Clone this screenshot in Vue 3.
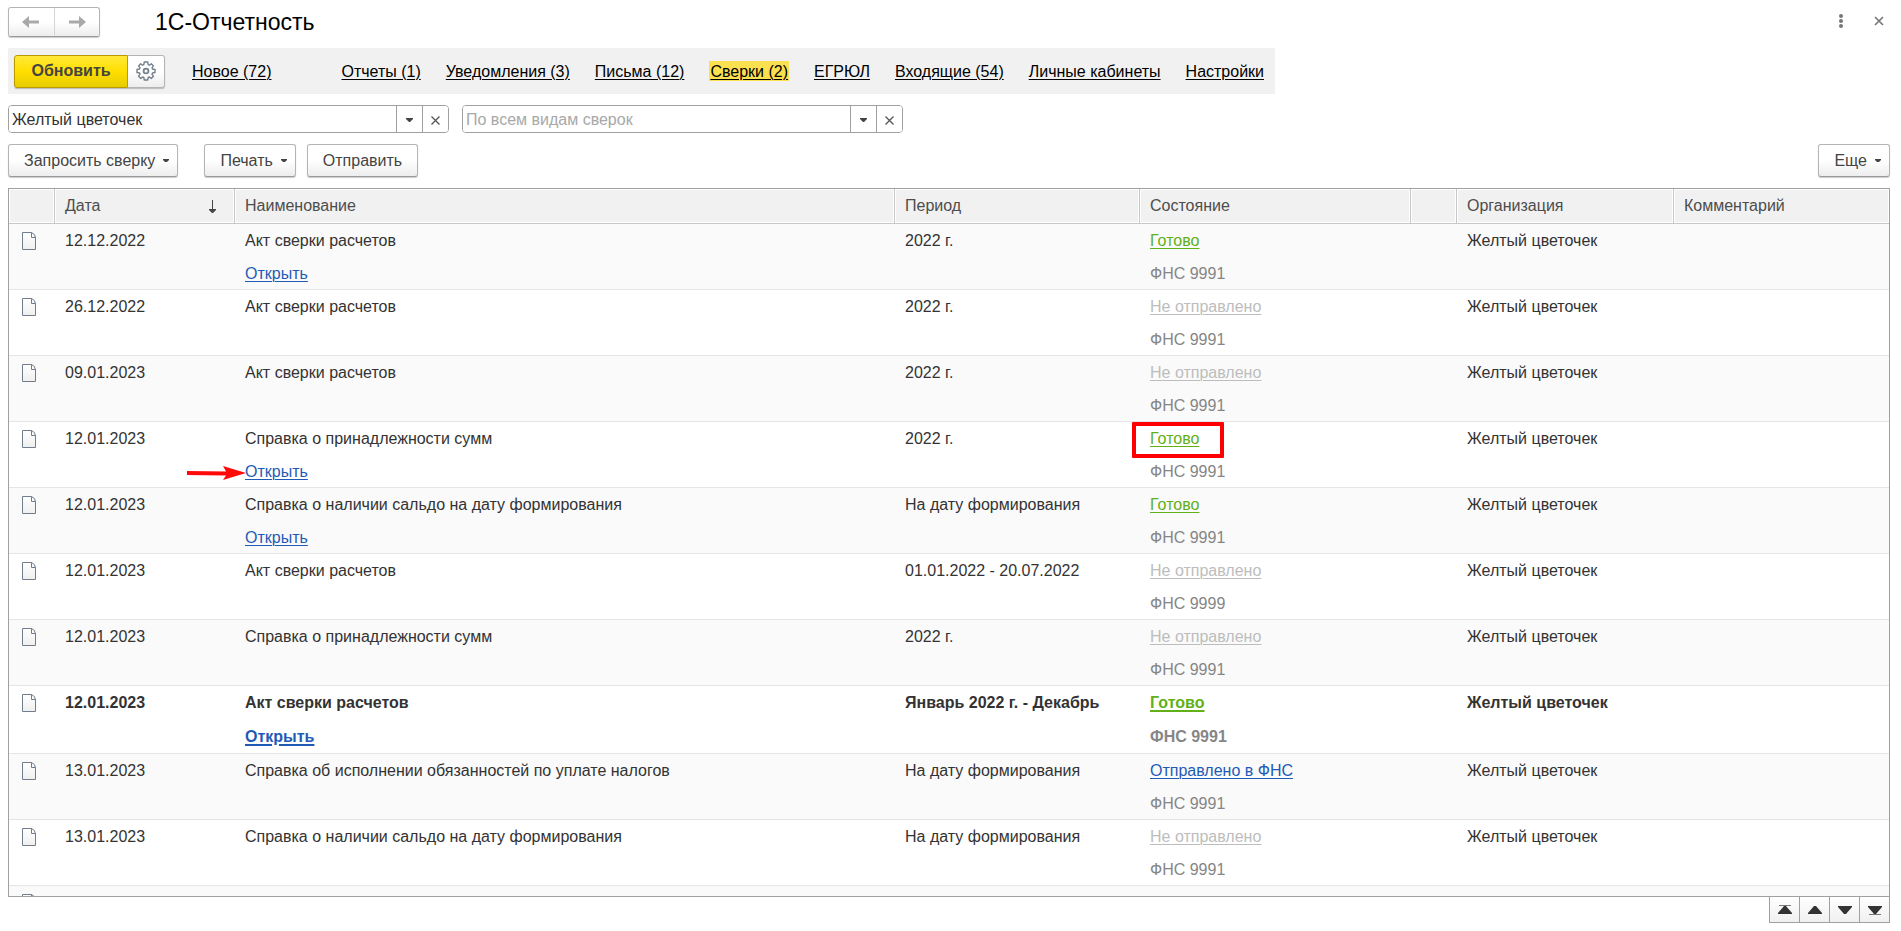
<script setup>
import { ref } from 'vue'

const organization = ref('Желтый цветочек')
const kind = ref('')

const links = [
  { text: 'Новое (72)', lead: true },
  { text: 'Отчеты (1)' },
  { text: 'Уведомления (3)' },
  { text: 'Письма (12)' },
  { text: 'Сверки (2)', current: true },
  { text: 'ЕГРЮЛ' },
  { text: 'Входящие (54)' },
  { text: 'Личные кабинеты' },
  { text: 'Настройки' },
]

const act = 'Акт сверки расчетов'
const belonging = 'Справка о принадлежности сумм'
const balance = 'Справка о наличии сальдо на дату формирования'
const onDate = 'На дату формирования'
const company = 'Желтый цветочек'
const ready = { text: 'Готово', tone: 'ready' }
const unsent = { text: 'Не отправлено', tone: 'unsent' }
const sent = { text: 'Отправлено в ФНС', tone: 'sent' }

const rows = [
  { date: '12.12.2022', name: act, open: true, period: '2022 г.', state: ready, office: 'ФНС 9991', company },
  { date: '26.12.2022', name: act, period: '2022 г.', state: unsent, office: 'ФНС 9991', company },
  { date: '09.01.2023', name: act, period: '2022 г.', state: unsent, office: 'ФНС 9991', company },
  { date: '12.01.2023', name: belonging, open: true, period: '2022 г.', state: ready, office: 'ФНС 9991', company, marked: true },
  { date: '12.01.2023', name: balance, open: true, period: onDate, state: ready, office: 'ФНС 9991', company },
  { date: '12.01.2023', name: act, period: '01.01.2022 - 20.07.2022', state: unsent, office: 'ФНС 9999', company },
  { date: '12.01.2023', name: belonging, period: '2022 г.', state: unsent, office: 'ФНС 9991', company },
  { date: '12.01.2023', name: act, open: true, period: 'Январь 2022 г. - Декабрь', state: ready, office: 'ФНС 9991', company, bold: true },
  { date: '13.01.2023', name: 'Справка об исполнении обязанностей по уплате налогов', period: onDate, state: sent, office: 'ФНС 9991', company },
  { date: '13.01.2023', name: balance, period: onDate, state: unsent, office: 'ФНС 9991', company },
  {},
]

const pagers = [
  { label: 'В начало', bar: 'M1 0H13V1H1Z', path: 'M6 1H8L14 8V9H0V8Z' },
  { label: 'Вверх', path: 'M6 1H8L14 8V9H0V8Z' },
  { label: 'Вниз', path: 'M0 1H14V2L8 9H6L0 2Z' },
  { label: 'В конец', bar: 'M1 9H13V10H1Z', path: 'M0 1H14V2L8 9H6L0 2Z' },
]
</script>

<template>
  <main class="page">
    <header class="top">
      <div class="history">
        <button type="button" class="history-button" aria-label="Назад">
          <svg width="18" height="14" viewBox="0 0 18 14"><path d="M0 7L7 1V5.5H17V8.5H7V13Z" fill="#a9a9a9" /></svg>
        </button>
        <button type="button" class="history-button" aria-label="Вперед">
          <svg width="18" height="14" viewBox="0 0 18 14"><path d="M18 7L11 1V5.5H1V8.5H11V13Z" fill="#a9a9a9" /></svg>
        </button>
      </div>
      <h1 class="title">1С-Отчетность</h1>
      <div class="window-tools">
        <button type="button" class="plain" aria-label="Меню">
          <svg width="6" height="16" viewBox="0 0 6 16" fill="#777"><circle cx="3" cy="3" r="2" /><circle cx="3" cy="8" r="2" /><circle cx="3" cy="13" r="2" /></svg>
        </button>
        <button type="button" class="plain" aria-label="Закрыть">
          <svg width="10" height="10" viewBox="0 0 10 10" stroke="#777" stroke-width="1.7"><path d="M1 1L9 9M9 1L1 9" /></svg>
        </button>
      </div>
    </header>

    <nav class="sections">
      <div class="refresh">
        <button type="button" class="refresh-button">Обновить</button>
        <button type="button" class="gear" aria-label="Настройка обновления">
          <svg width="20" height="20" viewBox="0 0 20 20" fill="none" stroke="#74808c" stroke-width="1.4" stroke-linejoin="round">
            <path d="M8.3 1H11.7L12.2 3.6L13.5 4.2L15.3 2.8L17.4 4.9L16 6.8L16.5 8L19 8.5V11.5L16.5 12L16 13.3L17.4 15.2L15.2 17.4L13.4 16L12.2 16.5L11.7 19H8.3L7.8 16.5L6.6 16L4.8 17.4L2.6 15.2L4 13.3L3.5 12L1 11.5V8.5L3.5 8L4 6.8L2.6 4.9L4.7 2.8L6.5 4.2L7.8 3.6Z" />
            <circle cx="10" cy="10" r="2.4" stroke-width="1.8" />
          </svg>
        </button>
      </div>
      <a v-for="l in links" :key="l.text" href="#" class="section" :class="{ lead: l.lead, current: l.current }">{{ l.text }}</a>
    </nav>

    <div class="filters">
      <div class="combo">
        <input v-model="organization" type="text" class="combo-input" aria-label="Организация">
        <button type="button" class="combo-button" aria-label="Выбрать организацию"><svg width="7" height="4" viewBox="0 0 7 4"><path d="M0 0H7V1L4 4H3L0 1Z" fill="#444" /></svg></button>
        <button type="button" class="combo-button" aria-label="Очистить организацию"><svg width="9" height="9" viewBox="0 0 9 9" stroke="#555" stroke-width="1.3"><path d="M.5 .5L8.5 8.5M8.5 .5L.5 8.5" /></svg></button>
      </div>
      <div class="combo">
        <input v-model="kind" type="text" class="combo-input" placeholder="По всем видам сверок" aria-label="Вид сверки">
        <button type="button" class="combo-button" aria-label="Выбрать вид сверки"><svg width="7" height="4" viewBox="0 0 7 4"><path d="M0 0H7V1L4 4H3L0 1Z" fill="#444" /></svg></button>
        <button type="button" class="combo-button" aria-label="Очистить вид сверки"><svg width="9" height="9" viewBox="0 0 9 9" stroke="#555" stroke-width="1.3"><path d="M.5 .5L8.5 8.5M8.5 .5L.5 8.5" /></svg></button>
      </div>
    </div>

    <div class="commands">
      <button type="button" class="command with-menu request">Запросить сверку<svg width="6" height="3" viewBox="0 0 6 3"><path d="M0 0H6V1L4 3H2L0 1Z" fill="#444" /></svg></button>
      <button type="button" class="command with-menu">Печать<svg width="6" height="3" viewBox="0 0 6 3"><path d="M0 0H6V1L4 3H2L0 1Z" fill="#444" /></svg></button>
      <button type="button" class="command">Отправить</button>
      <button type="button" class="command with-menu more">Еще<svg width="6" height="3" viewBox="0 0 6 3"><path d="M0 0H6V1L4 3H2L0 1Z" fill="#444" /></svg></button>
    </div>

    <div class="list">
      <table class="grid">
        <colgroup>
          <col class="c-icon"><col class="c-date"><col><col class="c-period"><col class="c-state"><col class="c-flag"><col class="c-org"><col class="c-note">
        </colgroup>
        <thead>
          <tr>
            <th></th>
            <th>
              <span class="sorted">Дата
                <svg width="7" height="13" viewBox="0 0 7 13"><path d="M3 0H4V9H7V10L4 13H3L0 10V9H3Z" fill="#444" /></svg>
              </span>
            </th>
            <th>Наименование</th>
            <th>Период</th>
            <th>Состояние</th>
            <th></th>
            <th>Организация</th>
            <th>Комментарий</th>
          </tr>
        </thead>
        <tbody>
          <tr v-for="(r, i) in rows" :key="i" :class="{ bold: r.bold }">
            <td class="icon-cell">
              <svg width="14" height="18" viewBox="0 0 14 18">
                <defs>
                  <linearGradient :id="`sheet-${i}`" x2="0" y2="1"><stop stop-color="#fff" /><stop offset="1" stop-color="#efefef" /></linearGradient>
                </defs>
                <path d="M.5 .5H9.5Q13.5 2 13.5 6V17.5H.5Z" :fill="`url(#sheet-${i})`" stroke="#6f7d8c" stroke-linejoin="round" />
                <path d="M9.5 .5V5.5H13.5" fill="none" stroke="#6f7d8c" />
              </svg>
            </td>
            <td>{{ r.date }}</td>
            <td>
              <div class="line">{{ r.name }}</div>
              <div v-if="r.open" class="line second">
                <a href="#" class="link sent">Открыть</a>
                <svg v-if="r.marked" class="pointer" width="59" height="14" viewBox="0 0 59 14"><path d="M0 5L39 5.5L36 0L59 7L36 14L39 9.5L0 9Z" fill="#ff0a0a" /></svg>
              </div>
            </td>
            <td>{{ r.period }}</td>
            <td>
              <template v-if="r.state">
                <div class="line">
                  <a href="#" class="link" :class="r.state.tone">{{ r.state.text }}</a>
                  <span v-if="r.marked" class="frame"></span>
                </div>
                <div class="line second office">{{ r.office }}</div>
              </template>
            </td>
            <td></td>
            <td>{{ r.company }}</td>
            <td></td>
          </tr>
        </tbody>
      </table>
    </div>

    <div class="pager">
      <button v-for="p in pagers" :key="p.label" type="button" class="pager-button" :aria-label="p.label">
        <svg width="14" height="10" viewBox="0 0 14 10"><path v-if="p.bar" :d="p.bar" fill="#777" /><path :d="p.path" fill="#333" /></svg>
      </button>
    </div>
  </main>
</template>

<style>
body {
  background: #fff;
}
</style>

<style scoped>
.page {
  box-sizing: border-box;
  display: flex;
  flex-direction: column;
  height: 100vh;
  padding: 7px 11px 8px 8px;
  overflow: hidden;
  font: 16px/20px "Liberation Sans", Arial, sans-serif;
  color: #333;
}
.page * {
  box-sizing: border-box;
}
button,
input {
  margin: 0;
  padding: 0;
  font: inherit;
  color: #444;
}
button {
  display: flex;
  align-items: center;
  justify-content: center;
}
svg {
  display: block;
  flex: none;
}
.top {
  display: flex;
  align-items: center;
  height: 30px;
}
.history {
  display: flex;
  width: 92px;
  height: 30px;
  border: 1px solid #b4b4b4;
  border-bottom-color: #999;
  border-radius: 3px;
  box-shadow: 0 1px 1px #ccc;
}
.history-button {
  flex: 1;
  border: 0;
  border-radius: 3px;
  background: linear-gradient(#fff 50%, #ededed);
}
.history-button + .history-button {
  border-left: 1px solid #d5d5d5;
  border-radius: 0 3px 3px 0;
}
.title {
  margin: 0 0 0 55px;
  font-size: 23px;
  font-weight: 400;
  line-height: 30px;
  color: #000;
}
.window-tools {
  display: flex;
  gap: 30px;
  margin-left: auto;
  padding: 0 6px 3px 0;
}
.plain {
  border: 0;
  background: none;
}
.sections {
  display: flex;
  align-items: center;
  align-self: flex-start;
  gap: 25px;
  height: 46px;
  margin-top: 11px;
  padding: 0 11px 0 6px;
  background: #f1f1f1;
}
.refresh {
  display: flex;
  height: 33px;
  margin-right: 2px;
}
.refresh-button {
  width: 114px;
  border: 1px solid #b79a00;
  border-radius: 3px 0 0 3px;
  background: linear-gradient(#ffe83a, #ffdf00 50%, #e8cc00);
  font-weight: 700;
  box-shadow: 0 1px 1px #bbb;
}
.gear {
  width: 37px;
  border: 1px solid #b4b4b4;
  border-left: 0;
  border-radius: 0 3px 3px 0;
  background: linear-gradient(#fff 50%, #ededed);
  box-shadow: 0 1px 1px #bbb;
}
.section {
  height: 20px;
  line-height: 22px;
  color: #000;
  text-decoration: underline 1px;
  text-underline-offset: 2px;
  white-space: nowrap;
}
.lead {
  margin-right: 45px;
}
.current {
  padding: 0 1px;
  background: #fbe04f;
}
.filters {
  display: flex;
  gap: 13px;
  margin-top: 11px;
}
.combo {
  display: flex;
  width: 441px;
  height: 28px;
  border: 1px solid #a0a0a0;
  border-radius: 4px;
  overflow: hidden;
}
.combo-input {
  flex: 1;
  min-width: 0;
  padding: 2px 0 0 3px;
  border: 0;
  outline: 0;
  color: #333;
}
.combo-input::placeholder {
  color: #a8a8a8;
}
.combo-button {
  width: 26px;
  padding: 2px 1px 0 0;
  border: 0;
  border-left: 1px solid #a0a0a0;
  background: #fff;
}
.commands {
  display: flex;
  gap: 11px;
  margin-top: 11px;
}
.command {
  height: 33px;
  padding: 0 15px;
  border: 1px solid #b4b4b4;
  border-bottom-color: #999;
  border-radius: 3px;
  background: linear-gradient(#fff 50%, #ededed);
  box-shadow: 0 1px 1px #ccc;
  white-space: nowrap;
}
.with-menu {
  gap: 8px;
  padding: 0 8px 0 15px;
}
.request {
  margin-right: 15px;
}
.more {
  margin-left: auto;
}
.list {
  flex: 1;
  min-height: 0;
  margin-top: 11px;
  border: 1px solid #a0a0a0;
  overflow: hidden;
}
.grid {
  width: 100%;
  table-layout: fixed;
  border-collapse: separate;
  border-spacing: 0;
}
.c-icon {
  width: 46px;
}
.c-date {
  width: 180px;
}
.c-period {
  width: 245px;
}
.c-state {
  width: 271px;
}
.c-flag {
  width: 46px;
}
.c-org {
  width: 217px;
}
.c-note {
  width: 215px;
}
th {
  height: 35px;
  padding: 0 9px 0 10px;
  border-right: 1px solid #c8c8c8;
  border-bottom: 1px solid #c8c8c8;
  background: #f1f1f1;
  box-shadow: inset 0 0 0 1px #fff;
  font-weight: 400;
  text-align: left;
  color: #4d4d4d;
}
th:last-child {
  border-right: 0;
}
.sorted {
  display: flex;
  align-items: center;
  justify-content: space-between;
  padding-right: 9px;
}
td {
  height: 66px;
  padding: 7px 0 5px 10px;
  border-bottom: 1px solid #e5e5e5;
  vertical-align: top;
  white-space: nowrap;
}
tbody tr:nth-child(odd) {
  background: #fafafa;
}
.icon-cell {
  padding: 8px 0 0 13px;
}
.line {
  position: relative;
}
.second {
  margin-top: 13px;
}
.bold td {
  height: 68px;
  font-weight: 700;
}
.bold .second {
  margin-top: 14px;
}
.link {
  text-decoration: underline 1px;
  text-underline-offset: 2px;
}
.bold .link {
  text-decoration-thickness: 2px;
}
.sent {
  color: #1f5bb5;
}
.ready {
  color: #62b015;
}
.unsent {
  color: #bdbdbd;
}
.office {
  color: #868686;
}
.pointer {
  position: absolute;
  left: -58px;
  top: 4px;
}
.frame {
  position: absolute;
  left: -18px;
  top: -7px;
  width: 92px;
  height: 36px;
  border: 4px solid #f00;
  border-radius: 1px;
}
.pager {
  display: flex;
  align-self: flex-end;
  height: 26px;
  border: solid #a0a0a0;
  border-width: 0 1px 1px 0;
}
.pager-button {
  width: 30px;
  border: 0;
  border-left: 1px solid #a0a0a0;
  background: linear-gradient(#fff, #f0f0f0);
}
</style>
